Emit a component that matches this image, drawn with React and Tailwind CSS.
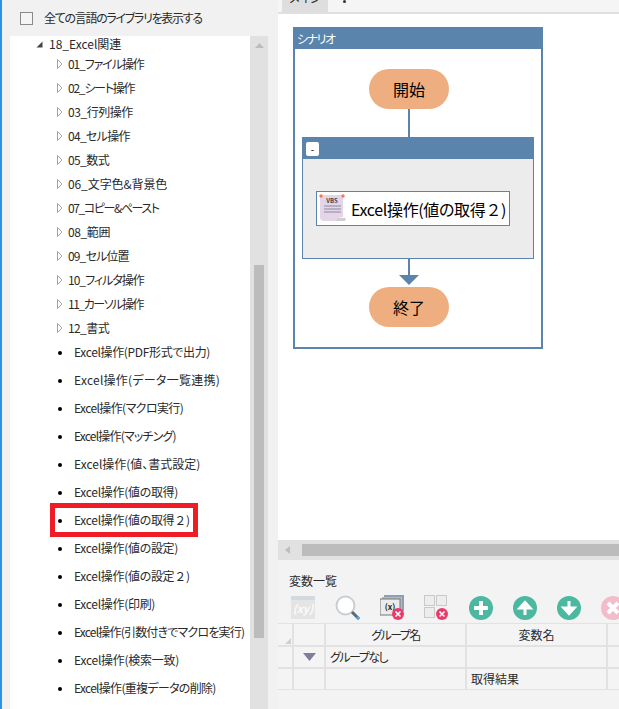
const folders = [
  ['01_ファイル操作', 'tracking-[-1.1px]'],
  ['02_シート操作', 'tracking-[-1.25px]'],
  ['03_行列操作', 'tracking-[-0.45px]'],
  ['04_セル操作', 'tracking-[-0.7px]'],
  ['05_数式', 'tracking-[-0.6px]'],
  ['06_文字色&背景色', 'tracking-[-0.1px]'],
  ['07_コピー&ペースト', 'tracking-[-1.4px]'],
  ['08_範囲', 'tracking-[-0.4px]'],
  ['09_セル位置', 'tracking-[-0.85px]'],
  ['10_フィルタ操作', 'tracking-[-1px]'],
  ['11_カーソル操作', 'tracking-[-1.45px]'],
  ['12_書式', 'tracking-[-0.6px]'],
];

const leaves = [
  ['Excel操作(PDF形式で出力)', 'tracking-[-0.35px]'],
  ['Excel操作(データ一覧連携)', 'tracking-[0.25px]'],
  ['Excel操作(マクロ実行)', 'tracking-[-0.6px]'],
  ['Excel操作(マッチング)', 'tracking-[-0.8px]'],
  ['Excel操作(値、書式設定)', ''],
  ['Excel操作(値の取得)', 'tracking-[-0.3px]'],
  ['Excel操作(値の取得2)', 'tracking-[-0.3px]'],
  ['Excel操作(値の設定)', 'tracking-[-0.3px]'],
  ['Excel操作(値の設定2)', 'tracking-[-0.3px]'],
  ['Excel操作(印刷)', 'tracking-[-0.3px]'],
  ['Excel操作(引数付きでマクロを実行)', 'tracking-[-0.8px]'],
  ['Excel操作(検索一致)', 'tracking-[-0.25px]'],
  ['Excel操作(重複データの削除)', 'tracking-[-0.7px]'],
];

// the full width digit keeps its wide box, the rest of the text is proportional
function Label({ text }) {
  return text.split(/(2)/).map((part, i) =>
    part === '2' ? <span key={i} className="[font-feature-settings:normal]">２</span> : part
  );
}

function RoundIcon({ color, kind }) {
  return (
    <svg width="24" height="24" viewBox="0 0 24 24" className="shrink-0">
      <circle cx="12" cy="12" r="12" fill={color} />
      {kind === 'plus' && <path d="M12 5v14M5 12h14" stroke="#fff" strokeWidth="4" />}
      {kind === 'up' && <path d="M12 19V11M7 12 12 6.500 17 12z" stroke="#fff" strokeWidth="3" fill="#fff" />}
      {kind === 'down' && <path d="M12 5v8M7 12 12 17.500 17 12z" stroke="#fff" strokeWidth="3" fill="#fff" />}
      {kind === 'x' && <path d="M7 7l10 10M17 7 7 17" stroke="#fff" strokeWidth="4" />}
    </svg>
  );
}

function RedX({ cx, cy }) {
  return (
    <g>
      <circle cx={cx} cy={cy} r="6" fill="#ea3a6c" />
      <path d={`M${cx - 2.500} ${cy - 2.500}l5 5m0-5l-5 5`} stroke="#fff" strokeWidth="1.600" />
    </g>
  );
}

function VbsIcon() {
  return (
    <svg width="28" height="29" viewBox="2 1 28 29" className="shrink-0">
      <path d="M7 25h22l-1 3H8z" fill="#cfcfcf" />
      <path d="M3 2h23v22l-5 1-3 3H7a4 4 0 0 1-4-4z" fill="#e4d6e8" />
      <circle cx="4" cy="3" r="1.700" fill="#f4795b" />
      <circle cx="26" cy="3" r="1.700" fill="#f4795b" />
      <text x="15" y="10" textAnchor="middle" fontSize="6" fontWeight="700" fill="#444">VBS</text>
      <path d="M7 13h17M7 16h17M7 19h17" stroke="#8a8a9c" strokeWidth="1.200" />
    </svg>
  );
}

function Cell({ className = '', children }) {
  return <div className={`bg-[#f4f4f4] flex items-center ${className}`}>{children}</div>;
}

export default function App() {
  return (
    <div
      className="w-[619px] h-[709px] overflow-hidden flex bg-[#f1f1f1] text-[12px] text-[#2a2a2a] [font-feature-settings:'palt']"
      style={{ fontFamily: '"Noto Sans CJK JP", "Noto Sans", sans-serif' }}
    >
      {/* left library panel */}
      <div className="w-[278px] shrink-0 border-l-2 border-[#2b93e6] flex flex-col pl-2 pr-2.5">
        <div className="h-9 shrink-0 flex items-center pl-2.5 gap-[11px]">
          <span className="w-[13px] h-[13px] border border-[#8a8a8a] bg-[#f5f5f5]" />
          <span className="tracking-[-1.3px]">全ての言語のライブラリを表示する</span>
        </div>
        <div className="flex-1 flex bg-white overflow-hidden">
          <div className="w-[240px] overflow-hidden">
            <div className="h-4 flex items-center pl-[26px] gap-[3px]">
              <svg width="7" height="7" viewBox="0 0 7 7" className="mr-[3px]"><path d="M6.500 0.500v6h-6z" fill="#444" /></svg>
              <span>18_Excel関連</span>
            </div>
            {folders.map(([name, tracking]) => (
              <div key={name} className="h-6 flex items-center pl-[47px]">
                <svg width="6" height="10" viewBox="0 0 6 10" className="mr-[5px]"><path d="M0.500 0.500 5 5 0.500 9.500z" fill="#fff" stroke="#a6a6a6" /></svg>
                <span className={tracking}>{name}</span>
              </div>
            ))}
            <div className="-mt-0.5">
              {leaves.map(([name, tracking]) => (
                <div key={name} className="relative h-7 flex items-center pl-[48px] whitespace-nowrap">
                  <span className="w-1 h-1 rounded-full bg-black mr-3 mt-0.5 shrink-0" />
                  <span className={tracking}><Label text={name} /></span>
                  {name === 'Excel操作(値の取得2)' && (
                    <span className="absolute left-[40px] top-[-3px] w-[148px] h-[34px] border-[5px] border-[#ee1c25]" />
                  )}
                </div>
              ))}
            </div>
          </div>
          <div className="w-[18px] bg-[#e1e1e1] flex flex-col items-center pt-[7px]">
            <svg width="9" height="5" viewBox="0 0 9 5"><path d="M0 5 4.500 0 9 5z" fill="#bdbdbd" /></svg>
            <div className="w-2.5 h-[373px] bg-[#bcbcbc] mt-[217px]" />
          </div>
        </div>
      </div>

      {/* right scenario panel */}
      <div className="flex-1 min-w-0 flex flex-col">
        <div className="h-3 shrink-0 flex items-start overflow-hidden bg-[#f5f5f5] pl-1">
          <div className="w-[46px] h-3 bg-[#dedede] flex justify-center items-start overflow-hidden">
            <span className="leading-[14px] -mt-[9px]">メイン</span>
          </div>
          <span className="w-[3px] h-[3px] rounded-full bg-[#333] ml-[15px]" />
        </div>
        <div className="h-[2px] shrink-0 bg-[#e0e0e0]" />

        <div className="h-[526px] shrink-0 bg-white pt-[13px] pl-[15px]">
          <div className="w-[250px] h-[322px] border-2 border-[#5b84ad] flex flex-col">
            <div className="h-5 shrink-0 bg-[#5b84ad] text-white flex items-center pl-[2px] tracking-[-1.5px]">シナリオ</div>
            <div className="flex flex-col items-start pt-5 pl-[7px]">
              <div className="w-20 h-10 ml-[67px] rounded-[20px] bg-[#eeae80] text-black text-[16px] flex items-center justify-center">開始</div>
              <div className="w-[2px] h-7 ml-[106px] bg-[#5b84ad]" />
              <div className="w-[232px] h-[122px] border border-[#5b84ad] bg-[#ececec] flex flex-col">
                <div className="h-[21px] shrink-0 bg-[#5b84ad] flex items-center pl-[3px]">
                  <span className="w-[13px] h-[14px] bg-white rounded-[2px] text-[10px] leading-[14px] text-center text-black">-</span>
                </div>
                <div className="mt-[32px] ml-[13px] w-[194px] h-[35px] border border-[#5b84ad] bg-white flex items-center pl-[2px] gap-1">
                  <VbsIcon />
                  <span className="text-[16px] text-black whitespace-nowrap tracking-[-0.35px]"><Label text="Excel操作(値の取得2)" /></span>
                </div>
              </div>
              <div className="w-[2px] h-4 ml-[106px] bg-[#5b84ad]" />
              <svg width="20" height="10" viewBox="0 0 20 10" className="block ml-[97px]"><path d="M0 0h20l-10 10z" fill="#5b84ad" /></svg>
              <div className="w-20 h-10 ml-[67px] rounded-[20px] bg-[#eeae80] text-black text-[16px] flex items-center justify-center mt-0.5">終了</div>
            </div>
          </div>
        </div>

        {/* horizontal scrollbar */}
        <div className="h-5 shrink-0 bg-[#e1e1e1] flex items-center pl-[7px]">
          <svg width="5" height="8" viewBox="0 0 5 8"><path d="M5 0v8L0 4z" fill="#bdbdbd" /></svg>
          <div className="h-3 flex-1 bg-[#bcbcbc] ml-[12px]" />
        </div>

        <div className="flex-1 flex flex-col bg-[#f3f3f3]">
          <div className="h-[35px] shrink-0 flex items-end pl-[11px] pb-[5px]"><span>変数一覧</span></div>
          <div className="h-[25px] shrink-0 flex items-center">
            <svg width="24" height="23" viewBox="0 0 24 23" className="ml-[13px] shrink-0">
              <rect x="0" y="0" width="24" height="23" fill="#e4e4e4" />
              <rect x="0" y="0" width="24" height="4" fill="#d2d9e0" />
              <text x="12" y="17" textAnchor="middle" fontSize="11" fontStyle="italic" fontWeight="700" fill="#fbfbfb">(xy)</text>
            </svg>
            <div className="w-px h-6 bg-[#9a9a9a] ml-[10px]" />
            <svg width="26" height="26" viewBox="0 0 26 26" className="ml-[10px] shrink-0">
              <circle cx="10.500" cy="10.500" r="9" fill="#fff" stroke="#c9ced4" strokeWidth="2" />
              <path d="M17 17l7 7" stroke="#5a6a7a" strokeWidth="3" />
              <path d="M22 22l2 2" stroke="#5aa9e0" strokeWidth="3" />
            </svg>
            <svg width="26" height="26" viewBox="0 0 26 26" className="ml-[19px] shrink-0">
              <rect x="4" y="0" width="20" height="16" fill="#8aa0b8" />
              <rect x="2" y="2" width="20" height="18" fill="#b9b9b9" />
              <rect x="0" y="4" width="20" height="16" fill="#ebebeb" stroke="#777" strokeWidth="1" />
              <text x="10" y="15" textAnchor="middle" fontSize="8" fontWeight="700" fill="#222">(x)</text>
              <RedX cx={18} cy={19} />
            </svg>
            <svg width="26" height="26" viewBox="0 0 26 26" className="ml-[18px] shrink-0">
              <g fill="#ededed" stroke="#c9c9c9">
                <rect x="0.500" y="0.500" width="10" height="10" />
                <rect x="12.500" y="0.500" width="10" height="10" />
                <rect x="0.500" y="12.500" width="10" height="10" />
              </g>
              <RedX cx={18} cy={19} />
            </svg>
            <div className="w-px h-6 bg-[#9a9a9a] ml-2" />
            <div className="ml-[11px] flex gap-5 shrink-0">
              <RoundIcon color="#4db8a0" kind="plus" />
              <RoundIcon color="#4db8a0" kind="up" />
              <RoundIcon color="#4db8a0" kind="down" />
              <RoundIcon color="#f3bccb" kind="x" />
            </div>
          </div>

          <div className="mt-[3px] bg-[#e2e2e2] grid grid-cols-[14px_30px_139px_139px_1fr] gap-[2px] py-px text-center">
            <Cell className="h-[21px] relative">
              <svg width="6" height="6" viewBox="0 0 6 6" className="absolute right-px bottom-px"><path d="M6 0v6H0z" fill="#d0d0d0" /></svg>
            </Cell>
            <Cell className="h-[21px]" />
            <Cell className="h-[21px] justify-center tracking-[-1.5px]">グループ名</Cell>
            <Cell className="h-[21px] justify-center">変数名</Cell>
            <Cell className="h-[21px]" />
            <Cell className="h-5" />
            <Cell className="h-5 justify-center">
              <svg width="13" height="8" viewBox="0 0 13 8"><path d="M0 0h13L6.500 8z" fill="#7f7f9c" /></svg>
            </Cell>
            <Cell className="h-5 pl-1 tracking-[-1.5px]">グループなし</Cell>
            <Cell className="h-5" />
            <Cell className="h-5" />
            <Cell className="h-5" />
            <Cell className="h-5" />
            <Cell className="h-5" />
            <Cell className="h-5 pl-1">取得結果</Cell>
            <Cell className="h-5" />
          </div>
        </div>
      </div>
    </div>
  );
}
